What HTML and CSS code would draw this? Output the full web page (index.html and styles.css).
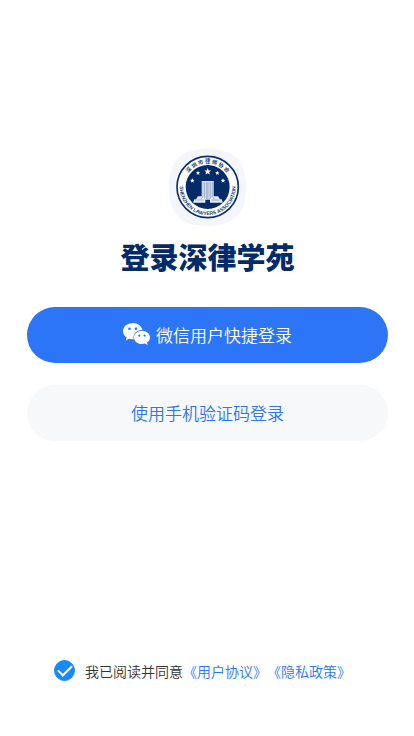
FILE: index.html
```html
<!DOCTYPE html>
<html lang="zh-CN">

<head>
    <meta charset="UTF-8">
    <meta name="viewport" content="width=device-width, initial-scale=1.0">
    <title>登录深律学苑</title>
    <link rel="stylesheet" href="styles.css">
</head>

<body>

    <main class="login">
        <svg class="logo" viewBox="25 27 231 231" role="img" aria-label="深圳市律师协会">
            <defs>
                <path id="arc-top" d="M70 141a71 71 0 0 1 142 0" />
                <path id="arc-bottom" d="M60 119A84 84 0 1 0 222 119" />
            </defs>
            <path class="logo-tile" d="M140 27C220 27 256 62 256 142S220 258 140 258 25 222 25 142 60 27 140 27z" />
            <circle class="logo-ring" cx="141" cy="141" r="92" />
            <circle class="logo-disc" cx="141" cy="141" r="66" />
            <text class="logo-cn"><textPath href="#arc-top" startOffset="50%">深 圳 市 律 师 协 会</textPath></text>
            <text class="logo-en"><textPath href="#arc-bottom" startOffset="50%">SHENZHEN LAWYERS ASSOCIATION</textPath></text>
            <g class="logo-white">
                <path d="M141 84l2.800 7.200 7.700.300-6 4.800 2.100 7.400-6.600-4.200-6.600 4.200 2.100-7.400-6-4.800 7.700-.300z" />
                <path d="M112 92l1.900 4.500 4.800.400-3.600 3.200 1.100 4.700-4.200-2.500-4.200 2.500 1.100-4.700-3.600-3.200 4.800-.400z" />
                <path d="M170 92l1.900 4.500 4.800.400-3.600 3.200 1.100 4.700-4.200-2.500-4.200 2.500 1.100-4.700-3.600-3.200 4.800-.400z" />
                <path d="M95 115l1.900 4.500 4.800.400-3.600 3.200 1.100 4.700-4.200-2.500-4.200 2.500 1.100-4.700-3.600-3.200 4.800-.400z" />
                <path d="M187 115l1.900 4.500 4.800.400-3.600 3.200 1.100 4.700-4.200-2.500-4.200 2.500 1.100-4.700-3.600-3.200 4.800-.400z" />
            </g>
            <path class="logo-hall" d="M123 123h36v46h13l6 9h5l4 10H148v-9h-14v9H97l4-10h5l6-9h11z" />
            <path class="logo-lines" d="M127 126v44l-6 8M132 126v50M137 126v52M141 126v52M145 126v52M150 126v50M155 126v44l6 8M105 180h24M153 180h24" />
        </svg>
        <h1 class="title">登录深律学苑</h1>

        <button class="btn btn-primary" type="button">
            <svg class="wechat" viewBox="0 0 27 22" aria-hidden="true">
                <path fill="#fff" d="M10 0C4.400 0 0 3.600 0 8.200c0 2.600 1.400 4.800 3.700 6.300L2.800 17.500l3.500-1.800c1.200.4 2.400.6 3.700.6h.7C9.500 11.500 13.400 7 18.500 7h.9C18.500 3 14.600 0 10 0z" />
                <path fill="#fff" d="M19 7.800c-4.500 0-8 3-8 6.700s3.500 6.600 8 6.600c1 0 2-.2 2.900-.5l2.800 1.400-.7-2.400c1.900-1.200 3-3 3-5.100 0-3.700-3.500-6.700-8-6.700z" />
                <g class="wechat-eyes">
                    <circle cx="6.500" cy="5.800" r="1.300" />
                    <circle cx="13" cy="5.800" r="1.300" />
                    <circle cx="16.300" cy="12.600" r="1.100" />
                    <circle cx="21.600" cy="12.600" r="1.100" />
                </g>
            </svg>
            微信用户快捷登录
        </button>
        <button class="btn btn-plain" type="button">使用手机验证码登录</button>

        <div class="terms">
            <input class="terms-check" type="checkbox" id="agree" checked>
            <p class="terms-text"><label for="agree">我已阅读并同意</label><a href="#user">《用户协议》</a><a href="#privacy">《隐私政策》</a></p>
        </div>
    </main>

</body>

</html>
```

FILE: styles.css
```css
* {
    box-sizing: border-box;
}

body {
    margin: 0;
    background-color: #fff;
    font-family: "Noto Sans CJK SC", sans-serif;
    font-weight: 350;
}

.login {
    display: flex;
    flex-direction: column;
    align-items: center;
    min-height: 100vh;
    padding: 149px 26px 55px 27px;
}

/* Logo */
.logo {
    width: 77px;
    height: 77px;
}

.logo-tile {
    fill: #f4f6fb;
}

.logo-ring {
    fill: #fff;
    stroke: #0b2f6e;
    stroke-width: 5;
}

.logo-disc {
    fill: #032b69;
}

.logo-cn,
.logo-en {
    fill: #23447c;
    text-anchor: middle;
}

.logo-cn {
    font-size: 16px;
    font-weight: bold;
}

.logo-en {
    font-family: "Liberation Sans", sans-serif;
    font-size: 15px;
    font-weight: bold;
}

.logo-white {
    fill: #fff;
}

.logo-hall {
    fill: #e6ebf3;
}

.logo-lines {
    fill: none;
    stroke: #5f7aa5;
    stroke-width: 1.5;
}

.title {
    margin: 10px 0 31px;
    color: #032b69;
    font-size: 29px;
    font-weight: 900;
    line-height: 40px;
}

/* Buttons */
.btn {
    display: flex;
    align-items: center;
    justify-content: center;
    gap: 6px;
    width: 100%;
    height: 56px;
    padding: 0 0 2px;
    border: none;
    border-radius: 28px;
    font-family: inherit;
    font-size: 17px;
    font-weight: inherit;
    cursor: pointer;
}

.btn-primary {
    margin-bottom: 22px;
    background-color: #2c75f6;
    color: #fff;
}

.btn-plain {
    background-color: #f7f8fa;
    color: #2c75f6;
}

.wechat {
    width: 27px;
    height: 22px;
}

.wechat-eyes {
    fill: #2c75f6;
}

/* User agreement */
.terms {
    display: flex;
    align-items: center;
    gap: 10px;
    margin-top: auto;
    padding-right: 10px;
}

.terms-check {
    display: flex;
    align-items: center;
    justify-content: center;
    width: 21px;
    height: 21px;
    margin: 0;
    border: 1px solid #1989fa;
    border-radius: 50%;
    appearance: none;
}

.terms-check:checked {
    background-color: #1989fa;
}

.terms-check:checked::before {
    content: "";
    width: 12px;
    height: 6px;
    margin-bottom: 4px;
    border: solid #fff;
    border-width: 0 0 2px 2px;
    transform: rotate(-45deg);
}

.terms-text {
    margin: 0;
    color: #333;
    font-size: 14px;
    line-height: 20px;
    text-spacing-trim: space-all;
}

.terms-text a {
    color: #2c75f6;
    text-decoration: none;
}
```
